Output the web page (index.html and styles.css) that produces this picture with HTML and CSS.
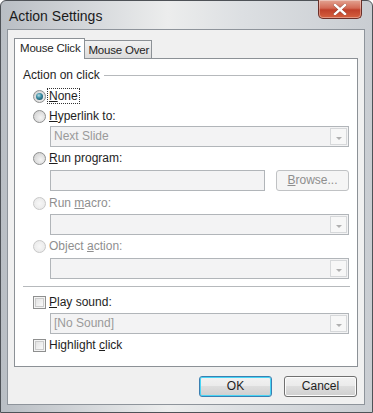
FILE: index.html
```html
<!DOCTYPE html>
<html lang="en">
<head>
    <meta charset="UTF-8">
    <title>Action Settings</title>
    <link rel="stylesheet" href="styles.css">
</head>
<body>
    <div class="window">
        <div class="titlebar">
            <span class="title">Action Settings</span>
            <span class="close">
                <svg width="14" height="11" viewBox="0 0 14 11">
                    <path d="M2 1 L12 10 M12 1 L2 10" stroke="#5a2a22" stroke-width="3.4" stroke-linecap="square" opacity="0.45"/>
                    <path d="M2 1 L12 10 M12 1 L2 10" stroke="#fff" stroke-width="2.4" stroke-linecap="square"/>
                </svg>
            </span>
        </div>
        <div class="client">
            <div class="tabs">
                <div class="tab active">Mouse Click</div>
                <div class="tab">Mouse Over</div>
            </div>
            <div class="panel">
                <div class="group-head"><span>Action on click</span><span class="rule"></span></div>

                <div class="row r-none">
                    <span class="radio checked"></span>
                    <span class="label focus"><u>N</u>one</span>
                </div>
                <div class="row r-link">
                    <span class="radio"></span>
                    <span class="label"><u>H</u>yperlink to:</span>
                </div>
                <div class="combo c-link"><span class="value">Next Slide</span><span class="drop"></span></div>

                <div class="row r-prog">
                    <span class="radio"></span>
                    <span class="label"><u>R</u>un program:</span>
                </div>
                <div class="field-row">
                    <div class="textbox"></div>
                    <div class="browse"><u>B</u>rowse...</div>
                </div>

                <div class="row r-macro disabled">
                    <span class="radio"></span>
                    <span class="label">Run <u>m</u>acro:</span>
                </div>
                <div class="combo c-macro"><span class="value"></span><span class="drop"></span></div>

                <div class="row r-obj disabled">
                    <span class="radio"></span>
                    <span class="label">Object <u>a</u>ction:</span>
                </div>
                <div class="combo c-obj"><span class="value"></span><span class="drop"></span></div>

                <div class="separator"></div>

                <div class="row r-sound">
                    <span class="check"></span>
                    <span class="label"><u>P</u>lay sound:</span>
                </div>
                <div class="combo c-sound"><span class="value">[No Sound]</span><span class="drop"></span></div>

                <div class="row r-high">
                    <span class="check"></span>
                    <span class="label">Highlight <u>c</u>lick</span>
                </div>
            </div>
            <div class="buttons">
                <div class="btn default">OK</div>
                <div class="btn">Cancel</div>
            </div>
        </div>
    </div>
</body>
</html>
```

FILE: styles.css
```css
body {
    margin: 0;
    font-family: "Liberation Sans", Arial, sans-serif;
    font-size: 11.5px;
    color: #1e1e1e;
    background: #fff;
}

.window {
    width: 373px;
    height: 413px;
    box-sizing: border-box;
    border: 1px solid #4e5257;
    border-radius: 6px 6px 0 0;
    background: linear-gradient(90deg, #b9bec4 0%, #d6d9dc 25%, #eceded 45%, #dcdfe2 65%, #c9cdd2 100%);
    padding: 0 7px 7px 6px;
}

.titlebar {
    height: 28px;
    display: flex;
    justify-content: space-between;
    align-items: flex-start;
}

.title {
    font-size: 14px;
    color: #1b1b1b;
    margin: 7px 0 0 2px;
}

.close {
    width: 42px;
    height: 18px;
    margin-right: 3px;
    margin-top: -1px;
    border: 1px solid #6b2f28;
    border-top: none;
    border-radius: 0 0 5px 5px;
    background: linear-gradient(#e3a493 0%, #d36a55 45%, #c0402a 55%, #d5613f 100%);
    display: flex;
    align-items: center;
    justify-content: center;
    box-shadow: inset 0 0 0 1px rgba(255, 255, 255, 0.35);
}

.client {
    height: 376px;
    box-sizing: border-box;
    background: #f0f0f0;
    border: 1px solid #8e949b;
    padding: 7px 6px 0 6px;
}

.tabs {
    display: flex;
    align-items: flex-end;
    height: 21px;
    position: relative;
    z-index: 1;
}

.tab {
    height: 16px;
    padding: 1px 2px 0 3px;
    border: 1px solid #8c9196;
    border-bottom: none;
    background: linear-gradient(#f2f2f2, #dcdcdc);
    font-size: 11.5px;
    line-height: 16px;
    letter-spacing: -0.2px;
}

.tab.active {
    height: 20px;
    line-height: 19px;
    padding: 0 4px 0 5px;
    background: #fff;
    margin-bottom: -1px;
}

.tab + .tab {
    border-left: none;
}

.panel {
    width: 344px;
    height: 309px;
    box-sizing: border-box;
    background: #fff;
    border: 1px solid #8c9196;
    padding: 8px 7px 0 8px;
}

.group-head {
    height: 16px;
    display: flex;
    align-items: center;
    gap: 4px;
    font-size: 12px;
}

.rule {
    flex: 1;
    border-top: 1px solid #b6b9bc;
    margin-top: 1px;
}

.row {
    height: 18px;
    display: flex;
    align-items: center;
    padding-left: 10px;
    gap: 3px;
    font-size: 12px;
}

.row.disabled .label {
    color: #8f8f8f;
}

.label u {
    text-underline-offset: 1px;
}

.focus {
    outline: 1px dotted #333;
    outline-offset: 0;
    padding: 0 1px;
    margin-left: -1px;
}

.radio {
    width: 11px;
    height: 11px;
    border-radius: 50%;
    border: 1px solid #8e8f8f;
    background: radial-gradient(circle at 60% 60%, #f4f4f4 0%, #dcdcdc 60%, #c9c9c9 100%);
    box-sizing: content-box;
    flex: none;
    position: relative;
}

.row.disabled .radio {
    border-color: #c8c8c8;
    background: radial-gradient(circle, #f7f7f7 0%, #e6e6e6 100%);
}

.radio.checked::after {
    content: "";
    position: absolute;
    left: 2px;
    top: 2px;
    width: 7px;
    height: 7px;
    border-radius: 50%;
    background: radial-gradient(circle at 40% 35%, #b7dde6 0%, #3d8fa4 40%, #0e3c52 100%);
}

.check {
    width: 11px;
    height: 11px;
    border: 1px solid #8e8f8f;
    background: linear-gradient(135deg, #dcdcdc 0%, #f2f2f2 60%, #fff 100%);
    box-shadow: inset 0 0 0 1px #f4f4f4, inset 0 0 0 2px #cbcbcb;
    flex: none;
}

.combo {
    height: 21px;
    box-sizing: border-box;
    margin-left: 27px;
    width: 299px;
    border: 1px solid #b1b5b9;
    background: #f3f3f4;
    display: flex;
    justify-content: space-between;
    align-items: stretch;
    color: #9a9a9a;
    font-size: 12px;
}

.value {
    padding-left: 3px;
    line-height: 19px;
}

.drop {
    width: 15px;
    margin: 1px;
    border: 1px solid #d6d8da;
    background: #f7f7f7;
    position: relative;
}

.drop::after {
    content: "";
    position: absolute;
    left: 5px;
    top: 8px;
    border-left: 3px solid transparent;
    border-right: 3px solid transparent;
    border-top: 3px solid #b0b0b0;
}

.field-row {
    display: flex;
    margin-left: 27px;
    margin-top: 3px;
    gap: 11px;
    width: 299px;
}

.textbox {
    width: 215px;
    height: 21px;
    box-sizing: border-box;
    border: 1px solid #b1b5b9;
    background: #f3f3f4;
}

.browse {
    width: 73px;
    height: 21px;
    box-sizing: border-box;
    border: 1px solid #c0c2c4;
    border-radius: 3px;
    background: #f5f5f5;
    color: #8e8e8e;
    text-align: center;
    line-height: 19px;
    font-size: 12px;
}

.r-none { margin-top: 4px; }
.r-link { margin-top: 2px; }
.c-link { margin-top: 1px; }
.r-prog { margin-top: 2px; }
.r-macro { margin-top: 3px; }
.c-macro { margin-top: 2px; }
.r-obj { margin-top: 2px; }
.c-obj { margin-top: 3px; }
.r-sound { margin-top: 6px; }
.c-sound { margin-top: 2px; }
.r-high { margin-top: 2px; }

.separator {
    margin-top: 7px;
    border-top: 1px solid #b6b9bc;
    width: 327px;
}

.buttons {
    display: flex;
    justify-content: flex-end;
    gap: 12px;
    margin-top: 9px;
    padding-right: 1px;
}

.btn {
    width: 73px;
    height: 21px;
    box-sizing: border-box;
    border: 1px solid #707070;
    border-radius: 3px;
    background: linear-gradient(#f2f2f2 0%, #ebebeb 45%, #dddddd 50%, #cfcfcf 100%);
    box-shadow: inset 0 0 0 1px #fcfcfc;
    text-align: center;
    line-height: 19px;
    font-size: 12px;
}

.btn.default {
    border-color: #3c7fb1;
    box-shadow: inset 0 0 0 1px #48d5f5;
}
```
